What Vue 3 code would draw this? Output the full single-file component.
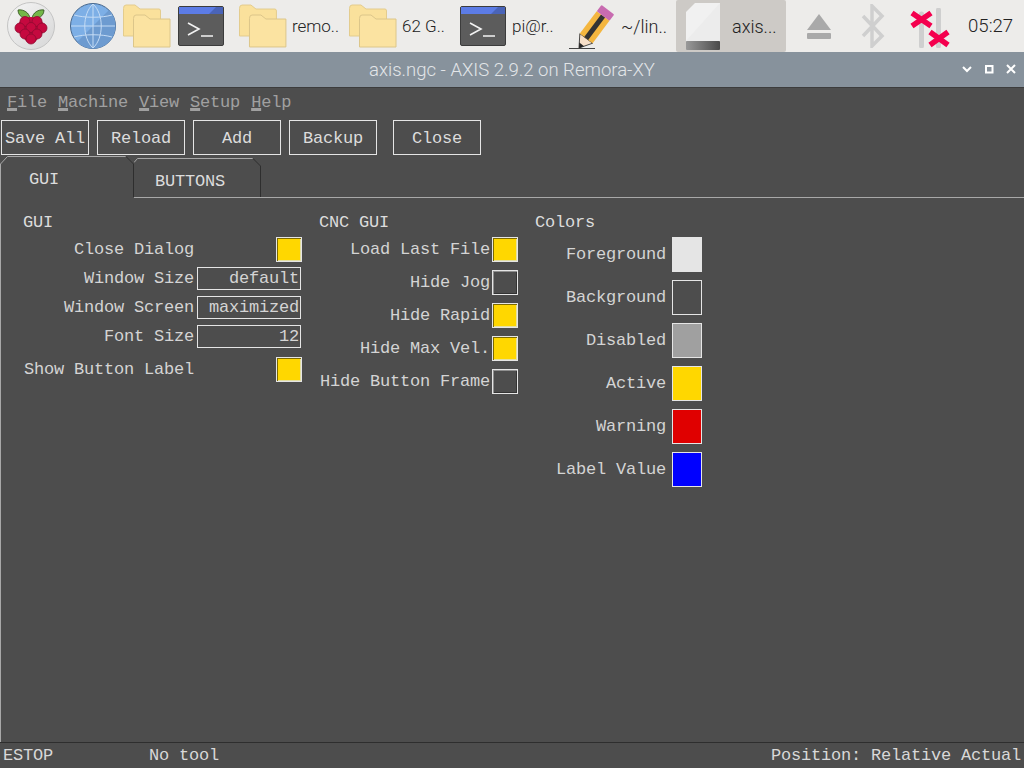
<script setup>
const menus = ['File', 'Machine', 'View', 'Setup', 'Help']
const buttons = ['Save All', 'Reload', 'Add', 'Backup']

const guiRows = [
  { label: 'Close Dialog', check: true, gap: 0 },
  { label: 'Window Size', value: 'default', gap: 5 },
  { label: 'Window Screen', value: 'maximized', gap: 6 },
  { label: 'Font Size', value: '12', gap: 6 },
  { label: 'Show Button Label', check: true, gap: 9 }
]
const cncRows = [
  { label: 'Load Last File', on: true },
  { label: 'Hide Jog', on: false },
  { label: 'Hide Rapid', on: true },
  { label: 'Hide Max Vel.', on: true },
  { label: 'Hide Button Frame', on: false }
]
const colors = [
  { label: 'Foreground', color: '#e5e5e5' },
  { label: 'Background', color: '#4d4d4d' },
  { label: 'Disabled', color: '#a0a0a0' },
  { label: 'Active', color: '#ffd700' },
  { label: 'Warning', color: '#e00000' },
  { label: 'Label Value', color: '#0000ff' }
]
const berries = [
  [18, 19.5], [30, 19.5], [13, 26], [24, 25.5], [35, 26], [18, 32], [30, 32], [24, 37]
]
</script>

<template>
  <div class="screen">
    <header class="panel">
      <svg class="raspi" width="48" height="48" viewBox="0 0 48 48">
        <defs>
          <linearGradient id="disc" x1="0" y1="0" x2="1" y2="1">
            <stop offset="0" stop-color="#f6f6f6" />
            <stop offset="1" stop-color="#d6d6d6" />
          </linearGradient>
        </defs>
        <circle cx="24" cy="24" r="23.5" fill="url(#disc)" stroke="#c4c4c4" />
        <path d="M23 16c-1-5-6-9-12-8 0 6 6 10 12 8z" fill="#74b748" stroke="#2d4d1c" stroke-width=".8" />
        <path d="M25 16c1-5 6-9 12-8 0 6-6 10-12 8z" fill="#74b748" stroke="#2d4d1c" stroke-width=".8" />
        <path d="M24 15c-7 0-12 3-13 9-1 5 2 8 5 10 2 5 5 7 8 7s6-2 8-7c3-2 6-5 5-10-1-6-6-9-13-9z" fill="#c5093f" />
        <circle v-for="(b, i) in berries" :key="i" :cx="b[0]" :cy="b[1]" r="5" fill="#c5093f" stroke="#8e0a30" stroke-width=".8" />
      </svg>
      <svg class="globe" width="46" height="46" viewBox="0 0 46 46">
        <circle cx="23" cy="23" r="22.5" fill="#7dafe6" stroke="#45668c" />
        <path d="M39 7A22.5 22.5 0 0 1 7 39z" fill="#6d9bd0" />
        <path d="M23 1v44M1 23h44M4 12c10 3 28 3 38 0M4 34c10-3 28-3 38 0M23 1c-11 10-11 34 0 44M23 1c11 10 11 34 0 44" fill="none" stroke="#c5dcf5" stroke-width="1" />
      </svg>
      <svg class="folder launcher-first" width="48" height="44" viewBox="0 0 48 44">
        <path d="M.5 4.5Q.5 1 3 1h9l5 4h19q1.500 0 1.500 2v25H.5z" fill="#fae19c" stroke="#e3cc8e" />
        <path d="M10.500 14.500Q10.500 11 13 11h9l5 4h20v28H10.500z" fill="#fbe3a1" stroke="#dcc68a" />
      </svg>
      <svg class="term launcher-next" width="46" height="40" viewBox="0 0 46 40">
        <rect x=".5" y=".5" width="45" height="39" rx="1.500" fill="#5c5c5c" stroke="#3c3c3c" />
        <rect x="1" y="1" width="44" height="7" fill="#5c7ce6" />
        <path d="M38 1h7v7H31z" fill="#4a64b8" />
        <path d="M10 17l11 6-11 6M23 30h12" fill="none" stroke="#f2f2f2" stroke-width="1.600" />
      </svg>

      <div class="task first">
        <svg class="folder" width="48" height="44" viewBox="0 0 48 44">
          <path d="M.5 4.500Q.5 1 3 1h9l5 4h19q1.500 0 1.500 2v25H.5z" fill="#fae19c" stroke="#e3cc8e" />
          <path d="M10.500 14.500Q10.500 11 13 11h9l5 4h20v28H10.500z" fill="#fbe3a1" stroke="#dcc68a" />
        </svg>
        <span>remo..</span>
      </div>
      <div class="task">
        <svg class="folder" width="48" height="44" viewBox="0 0 48 44">
          <path d="M.5 4.500Q.5 1 3 1h9l5 4h19q1.500 0 1.500 2v25H.5z" fill="#fae19c" stroke="#e3cc8e" />
          <path d="M10.500 14.500Q10.500 11 13 11h9l5 4h20v28H10.500z" fill="#fbe3a1" stroke="#dcc68a" />
        </svg>
        <span>62 G..</span>
      </div>
      <div class="task term-task">
        <svg class="term" width="46" height="40" viewBox="0 0 46 40">
          <rect x=".5" y=".5" width="45" height="39" rx="1.500" fill="#5c5c5c" stroke="#3c3c3c" />
          <rect x="1" y="1" width="44" height="7" fill="#5c7ce6" />
          <path d="M38 1h7v7H31z" fill="#4a64b8" />
          <path d="M10 17l11 6-11 6M23 30h12" fill="none" stroke="#f2f2f2" stroke-width="1.600" />
        </svg>
        <span>pi@r..</span>
      </div>
      <div class="task pencil-task">
        <svg width="46" height="50" viewBox="0 0 46 50">
          <path d="M0 47.500h26" stroke="#444" stroke-width="1" />
          <g transform="translate(10 47) rotate(37)">
            <path d="M0 0L-8-12H8z" fill="#f7dfc8" stroke="#333" stroke-width=".8" />
            <path d="M0 0L-3-4.500H3z" fill="#222" />
            <rect x="-8" y="-40" width="16" height="28" fill="#f4b63f" />
            <rect x="-2.500" y="-40" width="5" height="28" fill="#333" />
            <rect x="-8" y="-48" width="16" height="8" rx="1" fill="#c86bb0" />
          </g>
        </svg>
        <span>~/lin..</span>
      </div>
      <div class="task active">
        <svg width="34" height="47" viewBox="0 0 34 47">
          <defs>
            <linearGradient id="band" x1="0" y1="0" x2="1" y2="0">
              <stop offset="0" stop-color="#999" />
              <stop offset="1" stop-color="#4a4a4a" />
            </linearGradient>
          </defs>
          <path d="M9 0h25v38H0V9z" fill="#f1f1f1" />
          <path d="M34 0v38H0z" fill="#ececec" />
          <rect y="38" width="34" height="9" rx="1" fill="url(#band)" />
        </svg>
        <span>axis...</span>
      </div>

      <svg class="eject" width="26" height="26" viewBox="0 0 26 26">
        <path d="M13 1l12 16H1z" fill="#a9a9a9" />
        <rect x="1" y="20" width="24" height="6" rx="1" fill="#a9a9a9" />
      </svg>
      <svg class="bt" width="24" height="44" viewBox="0 0 24 44">
        <path d="M2 12l19 20L11 42V2l10 10L2 32" fill="none" stroke="#cfcfcf" stroke-width="3.500" />
      </svg>
      <svg class="net" width="40" height="40" viewBox="0 0 40 40">
        <path d="M11.500 6v32M28.500 2v36" stroke="#cfcfcf" stroke-width="5" stroke-linecap="round" />
        <path d="M2 5l19 13M21 5L2 18M20 24l18 13M38 24L20 37" stroke="#f4004e" stroke-width="5.500" />
      </svg>
      <span class="clock">05:27</span>
    </header>

    <div class="titlebar">
      <span class="title">axis.ngc - AXIS 2.9.2 on Remora-XY</span>
      <div class="winctl">
        <svg width="12" height="12" viewBox="0 0 12 12"><path d="M2 4l4 4 4-4" fill="none" stroke="#fff" stroke-width="2" /></svg>
        <svg width="12" height="12" viewBox="0 0 12 12"><rect x="3" y="3" width="6.500" height="6.500" fill="none" stroke="#fff" stroke-width="2" /></svg>
        <svg width="12" height="12" viewBox="0 0 12 12"><path d="M2 2l8 8M10 2l-8 8" fill="none" stroke="#fff" stroke-width="2" /></svg>
      </div>
    </div>

    <main class="window">
      <nav class="menubar">
        <span v-for="m in menus" :key="m" class="menu"><u>{{ m[0] }}</u>{{ m.slice(1) }}</span>
      </nav>

      <div class="toolbar">
        <button v-for="b in buttons" :key="b" class="btn"><span class="btn-text">{{ b }}</span></button>
        <button class="btn close"><span class="btn-text">Close</span></button>
      </div>

      <div class="tabs">
        <div class="tab tab-gui">
          <svg class="tab-edge" width="134" height="42" viewBox="0 0 134 42">
            <path d="M.5 42V8L7.500.5H126" fill="none" stroke="#a8a8a8" />
            <path d="M126 .5l7.500 7.500V41" fill="none" stroke="#2e2e2e" />
          </svg>
          GUI
        </div>
        <div class="tab tab-buttons">
          <svg class="tab-edge" width="127" height="40" viewBox="0 0 127 40">
            <path d="M0 4.500L3.500.5H119" fill="none" stroke="#a8a8a8" />
            <path d="M119 .5l7.500 7.500V39" fill="none" stroke="#2e2e2e" />
          </svg>
          BUTTONS
        </div>
        <div class="tab-rest"></div>
      </div>

      <section class="content">
        <div class="col col-gui">
          <div class="heading">GUI</div>
          <div v-for="r in guiRows" :key="r.label" class="row" :style="{ marginTop: r.gap + 'px' }">
            <span class="label">{{ r.label }}</span>
            <span v-if="r.check" class="check on push"></span>
            <span v-else class="field">{{ r.value }}</span>
          </div>
        </div>

        <div class="col col-cnc">
          <div class="heading">CNC GUI</div>
          <div class="cnc-rows">
            <div v-for="r in cncRows" :key="r.label" class="row">
              <span class="label">{{ r.label }}</span>
              <span class="check" :class="{ on: r.on }"></span>
            </div>
          </div>
        </div>

        <div class="col col-colors">
          <div class="heading">Colors</div>
          <div class="color-rows">
            <div v-for="c in colors" :key="c.label" class="color-row">
              <span class="label">{{ c.label }}</span>
              <span class="swatch" :style="{ background: c.color }"></span>
            </div>
          </div>
        </div>
      </section>

      <footer class="status">
        <span class="estop">ESTOP</span>
        <span>No tool</span>
        <span class="position">Position: Relative Actual</span>
      </footer>
    </main>
  </div>
</template>

<style>
html, body {
  margin: 0;
  background: #4d4d4d;
}
</style>

<style scoped>
.screen {
  width: 1024px;
  height: 768px;
  overflow: hidden;
  display: flex;
  flex-direction: column;
  background: #4d4d4d;
}

/* top panel */
.panel {
  height: 52px;
  flex: none;
  display: flex;
  align-items: center;
  background: #edecea;
  font-family: Roboto, "Liberation Sans", sans-serif;
  font-size: 17px;
  font-weight: 300;
  color: #222;
}
.raspi { margin-left: 7px; }
.globe { margin-left: 15px; }
.launcher-first { margin-left: 7px; }
.launcher-next { margin-left: 7px; }
.task {
  width: 110px;
  height: 52px;
  box-sizing: border-box;
  padding-left: 10px;
  display: flex;
  align-items: center;
  gap: 5px;
  flex: none;
  white-space: nowrap;
}
.task.first { margin-left: 5px; }
.term-task { padding-left: 11px; gap: 6px; }
.pencil-task { padding-left: 10px; gap: 6px; font-size: 18px; }
.task.active {
  margin-left: 7px;
  background: #cdcac6;
  border-radius: 2px;
  gap: 12px;
  font-size: 18px;
}
.eject { margin-left: 20px; }
.bt { margin-left: 29px; }
.net { margin-left: 25px; margin-top: 3px; }
.clock { margin-left: 18px; font-size: 18.6px; }

/* title bar */
.titlebar {
  height: 35px;
  flex: none;
  position: relative;
  display: flex;
  align-items: center;
  justify-content: center;
  background: #87929c;
  border-bottom: 1px solid #3c3c3c;
  font-family: Roboto, "Liberation Sans", sans-serif;
  font-size: 18.55px;
  font-weight: 300;
  color: #e2e5e8;
}
.winctl {
  position: absolute;
  right: 7px;
  top: 11px;
  display: flex;
  gap: 10px;
}

/* tk window */
.window {
  flex: 1;
  min-height: 0;
  display: flex;
  flex-direction: column;
  font-family: "Liberation Mono", monospace;
  font-size: 17px;
  letter-spacing: -0.2px;
  color: #dcdcdc;
}
.menubar {
  height: 32px;
  flex: none;
  display: flex;
  align-items: flex-start;
  padding: 5px 0 0 7px;
  box-sizing: border-box;
  gap: 11px;
  color: #a0a0a0;
}
.menu {
  line-height: 19px;
  white-space: pre;
}
.menu u {
  text-decoration: underline;
  text-decoration-thickness: 3px;
  text-underline-offset: 1px;
  text-decoration-skip-ink: none;
}
.toolbar {
  height: 35px;
  flex: none;
  display: flex;
  gap: 8px;
  padding-left: 1px;
}
.btn {
  width: 88px;
  height: 35px;
  padding: 0;
  background: transparent;
  border: 1px solid #e5e5e5;
  color: #dcdcdc;
  font: inherit;
  letter-spacing: inherit;
}
.btn-text {
  position: relative;
  top: 1px;
}
.btn.close { margin-left: 8px; }

.tabs {
  height: 43px;
  margin-top: 1px;
  flex: none;
  display: flex;
  align-items: flex-end;
}
.tab {
  position: relative;
  box-sizing: border-box;
  flex: none;
}
.tab-edge {
  position: absolute;
  left: 0;
  top: 0;
}
.tab-gui {
  width: 134px;
  height: 42px;
  margin-bottom: 1px;
  padding: 14px 0 0 29px;
  line-height: 19px;
}
.tab-buttons {
  width: 127px;
  height: 40px;
  margin-bottom: 1px;
  padding: 14px 0 0 21px;
  line-height: 19px;
  border-bottom: 1px solid #a8a8a8;
}
.tab-rest {
  flex: 1;
  height: 1px;
  margin-bottom: 1px;
  background: #a8a8a8;
}

.content {
  flex: 1;
  min-height: 0;
  display: flex;
  align-items: flex-start;
  border-left: 1px solid #a8a8a8;
  padding: 15px 0 0 22px;
  margin-top: -1px;
}
.col { flex: none; }
.col-gui { width: 279px; }
.col-cnc { width: 199px; margin-left: 17px; }
.col-colors { width: 167px; margin-left: 17px; }
.heading {
  height: 24px;
  line-height: 19px;
}
.row {
  display: flex;
  align-items: center;
}
.label {
  width: 171px;
  flex: none;
  text-align: right;
  white-space: nowrap;
  color: #d4d4d4;
}
.check {
  width: 26px;
  height: 25px;
  flex: none;
  box-sizing: border-box;
  margin-left: 2px;
  border: 1px solid #e5e5e5;
  box-shadow: inset 1px 1px 0 #8f8f8f, inset -1px -1px 0 #333;
}
.check.on {
  background: #ffd700;
  box-shadow: inset 1px 1px 0 #7d6a00, inset -1px -1px 0 #e5e0a0;
}
.check.push { margin-left: auto; }
.field {
  width: 104px;
  height: 23px;
  margin-left: 3px;
  box-sizing: border-box;
  border: 1px solid #e5e5e5;
  padding-right: 1px;
  line-height: 21px;
  text-align: right;
  color: #d4d4d4;
}
.cnc-rows {
  display: flex;
  flex-direction: column;
  gap: 8px;
}
.color-rows {
  display: flex;
  flex-direction: column;
  gap: 8px;
}
.color-row {
  display: flex;
  align-items: center;
  gap: 6px;
}
.color-row .label { width: 131px; }
.swatch {
  width: 30px;
  height: 35px;
  flex: none;
  box-sizing: border-box;
  border: 1px solid #e5e5e5;
}

.status {
  height: 26px;
  flex: none;
  box-sizing: border-box;
  display: flex;
  align-items: center;
  border-top: 1px solid #2e2e2e;
  padding: 0 3px;
  color: #d8d8d8;
}
.estop { width: 146px; }
.position { margin-left: auto; }
</style>
